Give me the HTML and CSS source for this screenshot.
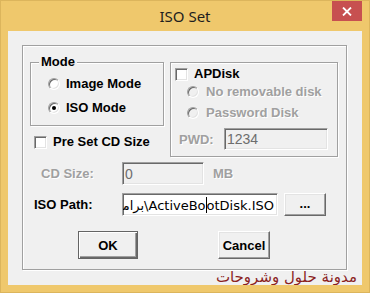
FILE: index.html
```html
<!DOCTYPE html>
<html>
<head>
<meta charset="utf-8">
<link rel="stylesheet" href="styles.css">
</head>
<body>
<div class="window">
  <div class="titlebar">
    <span></span>
    <div class="title">ISO Set</div>
    <div class="close"><svg width="10" height="9" viewBox="0 0 10 9"><path d="M1 0.5 L9 8.5 M9 0.5 L1 8.5" stroke="#fff" stroke-width="1.8" fill="none"/></svg></div>
  </div>
  <div class="client">
    <div class="group">
      <div class="top">
        <div class="leftcol">
          <div class="box mode">
            <div class="legend">Mode</div>
            <div class="opt img-opt"><span class="radio"></span><span>Image Mode</span></div>
            <div class="opt iso-opt"><span class="radio on"></span><span>ISO Mode</span></div>
          </div>
          <div class="opt preset"><span class="check"></span><span>Pre Set CD Size</span></div>
        </div>
        <div class="box apdisk">
          <div class="opt ap-opt"><span class="check"></span><span>APDisk</span></div>
          <div class="opt sub dis nr-opt"><span class="radio off"></span><span>No removable disk</span></div>
          <div class="opt sub dis pw-opt"><span class="radio off"></span><span>Password Disk</span></div>
          <div class="pwd-row">
            <span class="lbl dis pwd-lbl">PWD:</span>
            <div class="edit disabled pwd-edit">1234</div>
          </div>
        </div>
      </div>
      <div class="row cd-row">
        <span class="lbl dis cd-lbl">CD Size:</span>
        <div class="edit disabled cd-edit">0</div>
        <span class="lbl dis mb">MB</span>
      </div>
      <div class="row iso-row">
        <span class="lbl iso-lbl">ISO Path:</span>
        <div class="edit path-edit"><span class="path-text">برامج\ActiveBo<span class="caret"></span>otDisk.ISO</span></div>
        <div class="btn browse">...</div>
      </div>
      <div class="btn-row">
        <div class="btn ok">OK</div>
        <div class="btn cancel">Cancel</div>
      </div>
    </div>
    <div class="watermark">مدونة حلول وشروحات</div>
  </div>
</div>
</body>
</html>
```

FILE: styles.css
```css
* { box-sizing: border-box; }
html, body { margin: 0; padding: 0; }
body { width: 370px; height: 293px; overflow: hidden; background: #efc86c; }

.window {
  width: 370px;
  height: 293px;
  background: #efc86c;
  border: 1px solid #dcb55c;
  padding: 0 7px 7px 7px;
  display: flex;
  flex-direction: column;
  font-family: "Liberation Sans", Arial, sans-serif;
  font-size: 13px;
  font-weight: bold;
  color: #000;
}

.titlebar {
  height: 30px;
  margin: 0 -7px;
  display: grid;
  grid-template-columns: 1fr auto 1fr;
}
.title {
  font-family: "Noto Sans", "Open Sans", sans-serif;
  font-weight: normal;
  font-size: 15px;
  line-height: 30px;
  color: #1e1e1e;
}
.close {
  justify-self: end;
  align-self: start;
  margin: 0 7px 0 0;
  width: 30px;
  height: 20px;
  background: #c75050;
  display: flex;
  align-items: center;
  justify-content: center;
}

.client {
  height: 254px;
  background: #f0f0f0;
  padding: 14px 0 0 14px;
  display: flex;
  flex-direction: column;
  overflow: hidden;
}

.group {
  width: 325px;
  height: 225px;
  border: 1px solid #a0a0a0;
  box-shadow: 1px 1px 0 #fff, inset 1px 1px 0 #fff;
  padding: 16px 0 0 7px;
  display: flex;
  flex-direction: column;
}

.top { display: flex; gap: 6px; align-items: flex-start; }
.leftcol { display: flex; flex-direction: column; width: 134px; }

.box {
  border: 1px solid #a0a0a0;
  box-shadow: 1px 1px 0 #fff, inset 1px 1px 0 #fff;
}
.mode { height: 64px; width: 134px; padding-left: 17px; }
.legend {
  margin: -9px 0 0 -9px;
  padding: 0 2px;
  width: fit-content;
  background: #f0f0f0;
  line-height: 16px;
}

.opt {
  display: flex;
  align-items: center;
  height: 16px;
  line-height: 16px;
  white-space: nowrap;
}
.img-opt { margin-top: 6px; gap: 6px; }
.iso-opt { margin-top: 8px; gap: 6px; }
.preset { margin: 8px 0 0 4px; gap: 6px; }

.apdisk { width: 168px; height: 95px; padding-left: 4px; }
.ap-opt { margin-top: 3px; gap: 6px; }
.sub { padding-left: 12px; gap: 7px; }
.nr-opt { margin-top: 2px; }
.pw-opt { margin-top: 5px; }

.dis { color: #a0a0a0; text-shadow: 1px 1px 0 #fff; }

.radio {
  width: 12px; height: 12px;
  border-radius: 50%;
  border: 1px solid;
  border-color: #a0a0a0 #fff #fff #a0a0a0;
  box-shadow: inset 1px 1px 0 #696969, inset -1px -1px 0 #e3e3e3;
  background: #fff;
  flex: none;
  display: flex;
  align-items: center;
  justify-content: center;
}
.radio.off { background: #f0f0f0; }
.radio.on::after {
  content: "";
  width: 4px; height: 4px;
  border-radius: 50%;
  background: #000;
}

.check {
  width: 13px; height: 13px;
  border: 1px solid;
  border-color: #a0a0a0 #fff #fff #a0a0a0;
  box-shadow: inset 1px 1px 0 #696969, inset -1px -1px 0 #e3e3e3;
  background: #fff;
  flex: none;
}

.pwd-row {
  display: flex;
  align-items: center;
  margin-top: 7px;
  padding-left: 4px;
  height: 22px;
}
.pwd-lbl { width: 45px; }
.pwd-edit { width: 104px; height: 22px; }

.edit {
  border: 1px solid;
  border-color: #a0a0a0 #fff #fff #a0a0a0;
  box-shadow: inset 1px 1px 0 #696969, inset -1px -1px 0 #e3e3e3;
  background: #fff;
  font-weight: normal;
  font-size: 14px;
  padding: 0 2px;
  display: flex;
  align-items: center;
  white-space: nowrap;
  overflow: hidden;
}
.edit.disabled { background: #f0f0f0; color: #6d6d6d; }

.row { display: flex; align-items: center; height: 23px; }
.lbl { white-space: nowrap; }
.cd-row { margin-top: 5px; }
.cd-lbl { width: 92px; padding-left: 11px; }
.cd-edit { width: 82px; height: 23px; }
.mb { margin-left: 9px; }

.iso-row { margin-top: 8px; }
.iso-lbl { width: 92px; padding-left: 4px; }
.path-edit {
  width: 156px; height: 23px;
  justify-content: flex-end;
  padding: 0 3px 0 1px;
  font-family: "DejaVu Sans", sans-serif;
  font-size: 13px;
}
.path-text { flex: none; direction: ltr; }
.caret {
  display: inline-block;
  width: 1px;
  height: 16px;
  background: #000;
  vertical-align: -3px;
}

.btn {
  background: #f0f0f0;
  border: 1px solid;
  border-color: #fff #696969 #696969 #fff;
  box-shadow: inset -1px -1px 0 #a0a0a0, inset 1px 1px 0 #e3e3e3;
  display: flex;
  align-items: center;
  justify-content: center;
}
.browse { width: 42px; height: 23px; margin-left: 6px; padding-bottom: 2px; }

.btn-row { display: flex; margin-top: 15px; padding-left: 48px; gap: 80px; }
.ok {
  width: 60px; height: 28px;
  border: 1px solid #646464;
  box-shadow: inset 1px 1px 0 #fff, inset -1px -1px 0 #696969, inset -2px -2px 0 #a0a0a0;
}
.cancel { width: 52px; height: 28px; }

.watermark {
  align-self: flex-end;
  margin: -1px 5px 0 0;
  font-family: "DejaVu Sans", sans-serif;
  font-weight: normal;
  font-size: 15px;
  line-height: 16px;
  color: #8b1f1f;
  direction: rtl;
  white-space: nowrap;
}
```
